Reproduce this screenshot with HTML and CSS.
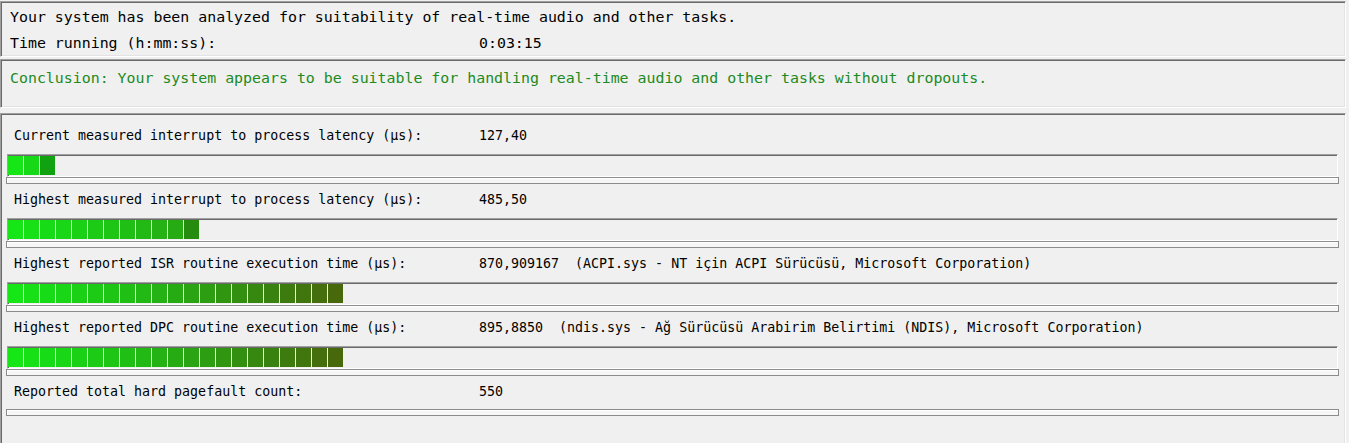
FILE: index.html
```html
<!DOCTYPE html>
<html>
<head>
<meta charset="utf-8">
<link rel="stylesheet" href="styles.css">
</head>
<body>
<div class="panel p1">
  <div class="line">Your system has been analyzed for suitability of real-time audio and other tasks.</div>
  <div class="line kv"><span class="k1">Time running (h:mm:ss):</span><span>0:03:15</span></div>
</div>
<div class="panel p2">
  <div class="concl">Conclusion: Your system appears to be suitable for handling real-time audio and other tasks without dropouts.</div>
</div>
<div class="panel p3">
  <div class="row">
    <div class="label"><span class="k">Current measured interrupt to process latency (µs):</span><span>127,40</span></div>
    <div class="bar">
      <i style="background:#16e616"></i><i style="background:#17d817"></i><i class="last" style="background:#12b412"></i>
    </div>
    <div class="track"></div>
  </div>
  <div class="row">
    <div class="label"><span class="k">Highest measured interrupt to process latency (µs):</span><span>485,50</span></div>
    <div class="bar">
      <i style="background:#16e616"></i><i style="background:#17e017"></i><i style="background:#18db17"></i><i style="background:#19d617"></i><i style="background:#1ad116"></i><i style="background:#1ccb16"></i><i style="background:#1ec515"></i><i style="background:#20bf15"></i><i style="background:#22b914"></i><i style="background:#25b214"></i><i style="background:#27ab13"></i><i class="last" style="background:#2a9c12"></i>
    </div>
    <div class="track"></div>
  </div>
  <div class="row">
    <div class="label"><span class="k">Highest reported ISR routine execution time (µs):</span><span>870,909167  (ACPI.sys - NT için ACPI Sürücüsü, Microsoft Corporation)</span></div>
    <div class="bar">
      <i style="background:#16e616"></i><i style="background:#17e017"></i><i style="background:#18db17"></i><i style="background:#19d617"></i><i style="background:#1ad116"></i><i style="background:#1ccb16"></i><i style="background:#1ec515"></i><i style="background:#20bf15"></i><i style="background:#22b914"></i><i style="background:#25b214"></i><i style="background:#27ab13"></i><i style="background:#2aa412"></i><i style="background:#2d9d12"></i><i style="background:#309611"></i><i style="background:#338f10"></i><i style="background:#368810"></i><i style="background:#3a820f"></i><i style="background:#3d7b0e"></i><i style="background:#41750d"></i><i style="background:#446f0c"></i><i style="background:#48690b"></i>
    </div>
    <div class="track"></div>
  </div>
  <div class="row">
    <div class="label"><span class="k">Highest reported DPC routine execution time (µs):</span><span>895,8850  (ndis.sys - Ağ Sürücüsü Arabirim Belirtimi (NDIS), Microsoft Corporation)</span></div>
    <div class="bar">
      <i style="background:#16e616"></i><i style="background:#17e017"></i><i style="background:#18db17"></i><i style="background:#19d617"></i><i style="background:#1ad116"></i><i style="background:#1ccb16"></i><i style="background:#1ec515"></i><i style="background:#20bf15"></i><i style="background:#22b914"></i><i style="background:#25b214"></i><i style="background:#27ab13"></i><i style="background:#2aa412"></i><i style="background:#2d9d12"></i><i style="background:#309611"></i><i style="background:#338f10"></i><i style="background:#368810"></i><i style="background:#3a820f"></i><i style="background:#3d7b0e"></i><i style="background:#41750d"></i><i style="background:#446f0c"></i><i style="background:#48690b"></i>
    </div>
    <div class="track"></div>
  </div>
  <div class="row last-row">
    <div class="label"><span class="k">Reported total hard pagefault count:</span><span>550</span></div>
    <div class="track"></div>
  </div>
</div>
</body>
</html>
```
FILE: styles.css
```css
html, body {
  margin: 0;
  padding: 0;
  background: #f0f0f0;
}
body {
  padding-top: 1px;
  font-family: "DejaVu Sans Mono", "Liberation Mono", monospace;
  color: #000;
  overflow: hidden;
  height: 442px;
}
.panel {
  width: 1346px;
  box-sizing: border-box;
  border: 1px solid;
  border-color: #a0a0a0 #ffffff #ffffff #a0a0a0;
  box-shadow: inset 1px 1px 0 #6a6a6a, inset -1px -1px 0 #e3e3e3;
  background: #f0f0f0;
}
.p1 {
  padding: 2px 9px 0 9px;
  font-size: 14.9px;
}
.line {
  line-height: 26px;
  height: 26px;
  white-space: pre;
}
.kv {
  display: flex;
}
.k1 {
  width: 469px;
  flex: none;
}
.p2 {
  margin-top: 2px;
  padding: 2px 9px 13px 9px;
  font-size: 14.9px;
}
.concl {
  line-height: 32px;
  color: #228a22;
  white-space: pre;
}
.p3 {
  margin-top: 5px;
  padding: 9px 0 0 0;
  height: 340px;
  font-size: 13.3px;
}
.row {
  padding-bottom: 3px;
}
.label {
  display: flex;
  padding-left: 13px;
  padding-top: 1px;
  height: 24px;
  line-height: 24px;
  white-space: pre;
}
.k {
  width: 465px;
  flex: none;
}
.bar {
  margin: 6px 7px 0 6px;
  height: 20px;
  box-sizing: content-box;
  padding-top: 1px;
  border: 1px solid;
  border-color: #a0a0a0 #ffffff #ffffff #a0a0a0;
  box-shadow: inset 1px 1px 0 #6a6a6a;
  display: flex;
  gap: 1px;
  background: #f0f0f0;
}
.bar i {
  display: block;
  width: 15px;
  height: 19px;
  flex: none;
}
.bar i.last {
  filter: brightness(0.9);
}
.track {
  margin: 0 6px 0 5px;
  height: 5px;
  border: 1px solid #8c8c8c;
  background: #f6f6f6;
  box-shadow: inset 1px 1px 0 #ffffff;
}
.last-row .track {
  margin-top: 5px;
}
```
